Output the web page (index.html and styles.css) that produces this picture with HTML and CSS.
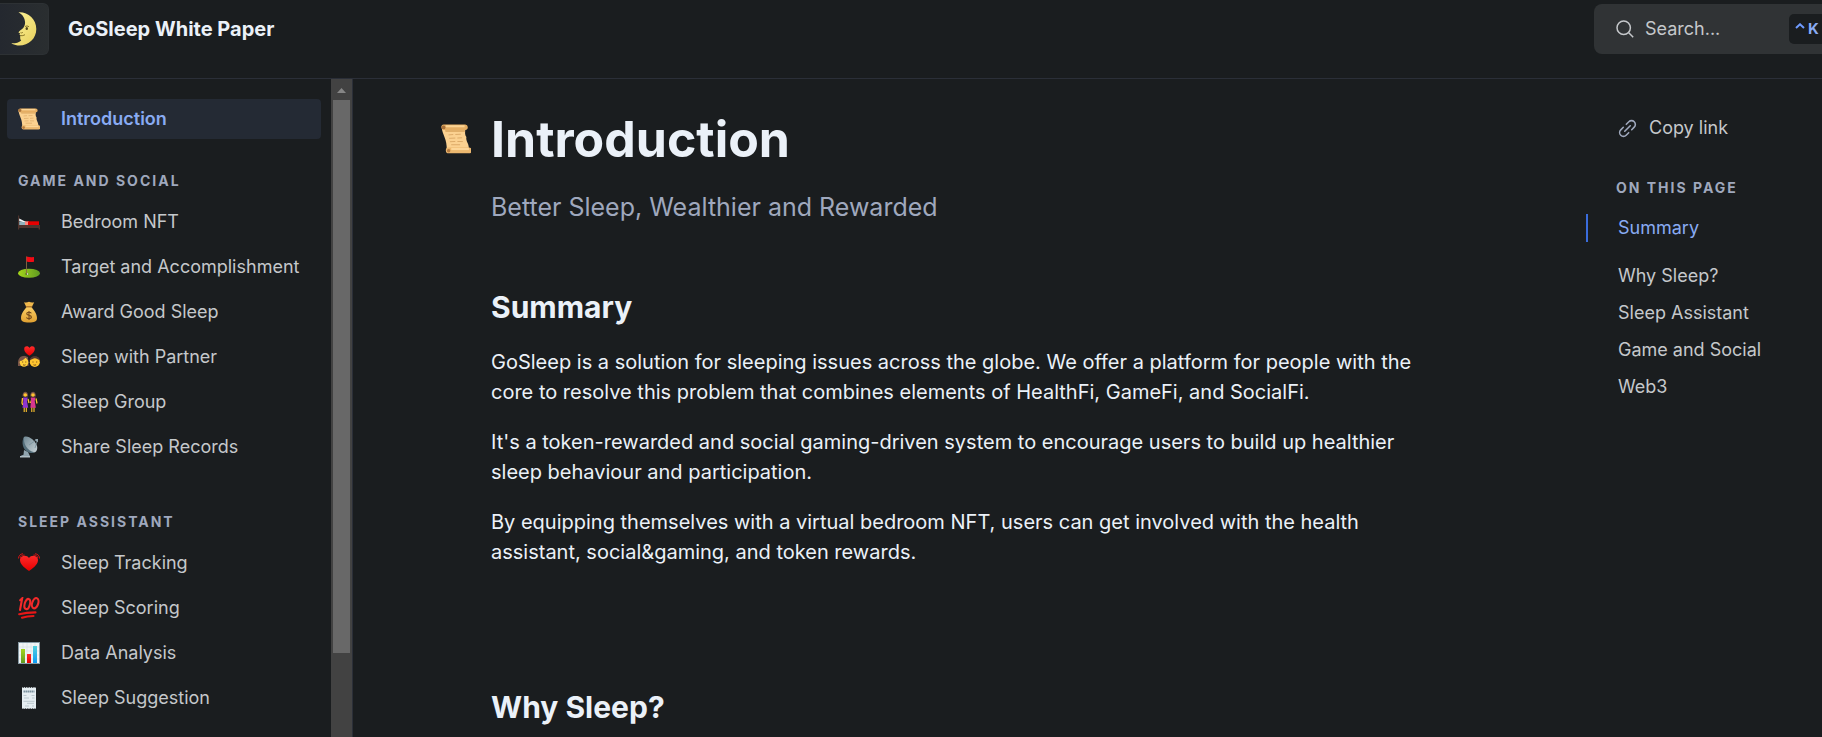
FILE: index.html
```html
<!DOCTYPE html>
<html lang="en">
<head>
<meta charset="utf-8">
<meta name="viewport" content="width=device-width, initial-scale=1">
<title>Introduction - GoSleep White Paper</title>
<link rel="stylesheet" href="styles.css">
</head>
<body>
<svg class="sprite" aria-hidden="true">
  <defs>
    <linearGradient id="g-moon" x1="0" y1="0" x2="1" y2="1"><stop offset="0" stop-color="#fff59a"/><stop offset="1" stop-color="#e6cf5c"/></linearGradient>
    <linearGradient id="g-grass" x1="0" y1="0" x2="1" y2="0"><stop offset="0" stop-color="#a5d61a"/><stop offset="1" stop-color="#5f9a22"/></linearGradient>
    <linearGradient id="g-bag" x1="0" y1="0" x2="0" y2="1"><stop offset="0" stop-color="#fbcf66"/><stop offset="1" stop-color="#e0a030"/></linearGradient>
    <linearGradient id="g-red" x1="0" y1="0" x2="0" y2="1"><stop offset="0" stop-color="#ff2a2a"/><stop offset="1" stop-color="#e60000"/></linearGradient>
    <linearGradient id="g-green" x1="0" y1="0" x2="0" y2="1"><stop offset="0" stop-color="#a5d61a"/><stop offset="1" stop-color="#5f9a22"/></linearGradient>
    <linearGradient id="g-blue" x1="0" y1="0" x2="0" y2="1"><stop offset="0" stop-color="#54d0dc"/><stop offset="1" stop-color="#0b9bf5"/></linearGradient>
    <linearGradient id="g-dish" x1="0" y1="0" x2="1" y2="1"><stop offset="0" stop-color="#6f8792"/><stop offset="1" stop-color="#c8d3d8"/></linearGradient>
    <symbol id="scroll" viewBox="0 0 22 22">
      <path d="M.6 3C1 8 4.600 11 4.200 19.500L20.500 19C20.800 14 18 13 18.600 9.500 17.300 8 17.600 6 18 3z" fill="#fbd190"/>
      <path d="M2 .4h15.500a2 2 0 0 1 .3 4H2.500A2 2 0 0 1 2 .4z" fill="#e5ae63"/>
      <path d="M3.500 .9h13.800v1.500H3.500z" fill="#fbd393"/>
      <path d="M3 4.600h14.500v1H3.300z" fill="#d9a35c"/>
      <circle cx="1.900" cy="2.500" r="1.400" fill="#a9713a"/>
      <path d="M5.500 17.300h15a2.100 2.100 0 0 1 0 4.200H5.800a2.100 2.100 0 0 1-.3-4.200z" fill="#ecb86f"/>
      <path d="M7.500 17.600h13v1.500h-13z" fill="#fdd698"/>
      <circle cx="5.600" cy="19.600" r="1.300" fill="#b67c41"/>
      <path d="M5.500 8l3.500-.3m1.500 0l4-.2M6 10.500l4.500-.2m1.500 0l3.500-.2M6.500 13l4-.2m1.500 0l4 .1M7.500 15.200h6.500" stroke="#dba967" stroke-width=".7" fill="none"/>
    </symbol>
    <symbol id="bed" viewBox="0 0 22 22">
      <path d="M0 4.500h1.200V18.500H0zM20.600 14H22v4.500h-1.400zM1 14h20v3H1z" fill="#4e342e"/>
      <path d="M1.200 10.500H8V14H1.200z" fill="#90b2bd"/>
      <path d="M1.200 7.500l3 1.500L8 11H5L1.200 10z" fill="#f4f7f8"/>
      <path d="M7 10.300h4V14H7z" fill="#ff8a80"/><path d="M10 10.300h11V14H10z" fill="#e60000"/>
    </symbol>
    <symbol id="golf" viewBox="0 0 22 22">
      <ellipse cx="11" cy="17.300" rx="11" ry="4.500" fill="url(#g-grass)"/>
      <ellipse cx="9" cy="18" rx="2" ry=".8" fill="#3f6b16"/><circle cx="9.600" cy="18" r=".8" fill="#fff"/>
      <path d="M8 .5h.9V18H8z" fill="#8b6a43"/><path d="M8.600.4Q12 1.500 16 1v4.700Q12 6.500 8.600 5.500z" fill="#f30a14"/>
    </symbol>
    <symbol id="bag" viewBox="0 0 22 22">
      <path d="M6 1.200Q8.500 2 11 .7 13.500 2 16.200 1.200L13.800 6H8.300z" fill="#f0b84c"/>
      <path d="M8.500 6h5C15 8.500 19 12 19 17c0 3.500-2.500 4.600-8 4.600S3 20.500 3 17C3 12 7 8.500 8.500 6z" fill="url(#g-bag)"/>
      <path d="M7.800 5.800h6.500" stroke="#a46b29" stroke-width="1.200"/>
      <path d="M13.300 12.300c-.5-1.500-4.600-1.600-4.600.5s4.700 1 4.700 3.200-4.500 2-4.900.3M11 10v9" stroke="#764c1d" fill="none" stroke-width="1.100"/>
    </symbol>
    <symbol id="couple" viewBox="0 0 22 22">
      <path d="M11.500 9.800C7 7 6.200 4.500 6.200 2.700 6.500-.5 10.500-.3 11.500 2c1-2.300 5-2.500 5.300.7 0 1.800-.8 4.300-5.300 7.100z" fill="url(#g-red)"/>
      <path d="M0 20c-.5-3 0-10 5.500-10S11 17 10.500 20z" fill="#795548"/>
      <ellipse cx="6" cy="16.200" rx="4.300" ry="4.600" fill="#ffcf3a"/><path d="M1.500 15c3 0 5-2 6-3.500 1 .5 2 1.500 2.500 2.500V11L6 9.800 2 12z" fill="#795548"/>
      <path d="M11.500 15c0-6.500 10.500-6.500 10.500 0z" fill="#4b3029"/><ellipse cx="16.800" cy="16.200" rx="5" ry="4.800" fill="#ffc42e"/>
      <path d="M12 14c0-5 9.600-5 9.600 0-2-.5-3-1.500-4.800-1.700-1.600.2-2.800 1.200-4.800 1.700z" fill="#543930"/>
      <path d="M4.200 16h1M7.300 16h1M14.500 16h1M18.200 16h1M5 18.800q1.200.8 2.500 0M15.500 18.800q1.300.8 2.600 0" stroke="#643b18" stroke-width=".9" fill="none"/>
    </symbol>
    <symbol id="women" viewBox="0 0 22 22">
      <path d="M4.500 7L4 12l.8 2M10 8l1 4M12.500 12l1.500-4M18 7.500l1 5" stroke="#ffc42e" stroke-width="1.300" fill="none"/>
      <path d="M6.200 15v6M8.300 15v6M13.800 15v6M16 15v6" stroke="#ffc42e" stroke-width="1.100"/>
      <path d="M5 6.500h4.800L9 10l1.200 6.800H4.500L5.400 10z" fill="#8e35d0"/><path d="M12.700 6.500h4.800L16.700 10l1.200 6.800h-5.600l.8-6.800z" fill="#d8368f"/>
      <path d="M4.600 5.500c-.5-6.500 6-6.500 5.500 0zM12.300 5.500c-.5-6.500 6-6.500 5.500 0z" fill="#795548"/>
      <circle cx="7.300" cy="4" r="1.800" fill="#ffc42e"/><circle cx="15" cy="4" r="1.800" fill="#ffc42e"/>
    </symbol>
    <symbol id="dish" viewBox="0 0 22 22">
      <path d="M6 14l4 2 2 4.300H2.500q.2-1 3-1.500z" fill="#90a4ae"/><path d="M2 20h10v1.500H2z" fill="#b0bec5"/>
      <path d="M6 1c4-2 11 3 13 9 1 4-1 7-4 6.500C10 16 3 8 6 1z" fill="url(#g-dish)"/>
      <path d="M6 1C3 6 5 13 9 15.500c3 2 6 1.800 7.500.8C9 15 5 7 6 1z" fill="#546e7a"/>
      <path d="M11 9l8-5.500M17 12l2.500-8" stroke="#78909c" stroke-width=".8"/><path d="M17 3h3v3l-1.500-.5z" fill="#90a4ae"/>
    </symbol>
    <symbol id="heart" viewBox="0 0 22 22">
      <path d="M11 19C5 15 2 11.500 2 8 2 3.500 8.500 2 11 6c2.500-4 9-2.500 9 2 0 3.500-3 7-9 11z" fill="url(#g-red)"/>
      <path d="M.5 6.500C.5 4 2 2 5 1.700M2.200 6C2.500 4 4 3 6.500 3M21.500 6.500C21.500 4 20 2 17 1.700M19.800 6c-.3-2-1.800-3-4.300-3" stroke="#e31313" stroke-width=".9" fill="none"/>
    </symbol>
    <symbol id="hundred" viewBox="0 0 22 22">
      <g fill="none" stroke="#f42a2a" stroke-width="2.100" stroke-linecap="round">
        <path d="M2.200 3.200L4.200 1.300 2 13"/><ellipse cx="9.300" cy="7" rx="2.600" ry="5.200" transform="rotate(15 9.300 7)"/><ellipse cx="17.200" cy="6.200" rx="3" ry="5.300" transform="rotate(18 17.200 6.200)"/>
        <path d="M1.200 17.200Q8 15.500 17.500 15.400M4 20.700q5-1.500 11.500-1.700" stroke="#e71717"/>
      </g>
    </symbol>
    <symbol id="chart" viewBox="0 0 22 22">
      <path d="M0 0h22v22H0z" fill="#879aa4"/><path d="M1 1h20v20H1z" fill="#f2f5f6"/>
      <path d="M1 5h20M1 9h20M1 13h20M1 17h20M5 1v20M9 1v20M13 1v20M17 1v20" stroke="#cfd8dc" stroke-width=".5"/>
      <path d="M3 7h4v14H3z" fill="url(#g-green)"/><path d="M9 12h4v9H9z" fill="url(#g-red)"/><path d="M15 4h4v17h-4z" fill="url(#g-blue)"/>
    </symbol>
    <symbol id="receipt" viewBox="0 0 22 22">
      <path d="M4 0l1.200 1L6.400 0l1.200 1 1.200-1L10 1l1.200-1 1.200 1 1.200-1 1.200 1L16 0l1.200 1L18 0v22l-1-.8-1.200.8-1.200-.8-1.200.8-1.200-.8-1.200.8-1.200-.8-1.200.8-1.200-.8-1.200.8-1.200-.8L4 22z" fill="#e6eef2"/>
      <path d="M5.500 4.500h11" stroke="#7c929e" stroke-width="1.800" stroke-dasharray="1.600 .4"/>
      <path d="M5.500 8.500h3m5 0h3M6 11h5m3 0h2.500M5.500 14.300h11M9 16.300h7M7 19h4m3 0h2" stroke="#b5c3ca" stroke-width=".9"/>
    </symbol>
  </defs>
</svg>

<header class="topbar">
  <a class="brand" href="#">
    <span class="brand-logo">
      <svg class="moon" viewBox="0 0 26 34" aria-hidden="true">
        <path d="M7.500.3C17-.2 25.300 7 25.300 17S17 34.300 6.500 33.500C4 33.200 1.500 32.300.3 31.300c4.200.2 7.500-.8 9.900-2.900-.8-.7-1.200-1.500-.9-2.500L9 24.600l1-.9-1.500-1 .5-1.500-1.600-.8c.9-1.800 3.600-2.800 5-4.600C16 10.500 13.500 3.500 7.500.3z" fill="url(#g-moon)"/>
        <path d="M14 14.500q2-1.300 4 .2M9.500 23.700q2.500.3 4.500-1M9.500 20.700q1.300.6 2.300-.3" stroke="#8b7928" stroke-width="1" fill="none"/>
        <ellipse cx="15.800" cy="16.500" rx="1.200" ry="1.600" fill="#53481b"/>
      </svg>
    </span>
    <span class="brand-name">GoSleep White Paper</span>
  </a>
  <label class="search">
    <svg class="search-icon" viewBox="0 0 18 18" aria-hidden="true"><circle cx="7.700" cy="7.700" r="6.700"/><path d="M12.500 12.500l4.700 4.700"/></svg>
    <input class="search-input" type="text" placeholder="Search..." aria-label="Search">
    <kbd class="shortcut"><svg class="caret" viewBox="0 0 10 6" aria-hidden="true"><path d="M1 5l4-3.700L9 5"/></svg>K</kbd>
  </label>
</header>

<div class="layout">
  <aside class="sidebar">
    <nav class="side-nav" aria-label="Pages">
      <a class="page-link active" href="#"><svg class="emoji"><use href="#scroll"/></svg>Introduction</a>
      <h2 class="group-title">GAME AND SOCIAL</h2>
      <ul class="page-list">
        <li><a class="page-link" href="#"><svg class="emoji"><use href="#bed"/></svg>Bedroom NFT</a></li>
        <li><a class="page-link" href="#"><svg class="emoji"><use href="#golf"/></svg>Target and Accomplishment</a></li>
        <li><a class="page-link" href="#"><svg class="emoji"><use href="#bag"/></svg>Award Good Sleep</a></li>
        <li><a class="page-link" href="#"><svg class="emoji"><use href="#couple"/></svg>Sleep with Partner</a></li>
        <li><a class="page-link" href="#"><svg class="emoji"><use href="#women"/></svg>Sleep Group</a></li>
        <li><a class="page-link" href="#"><svg class="emoji"><use href="#dish"/></svg>Share Sleep Records</a></li>
      </ul>
      <h2 class="group-title">SLEEP ASSISTANT</h2>
      <ul class="page-list">
        <li><a class="page-link" href="#"><svg class="emoji"><use href="#heart"/></svg>Sleep Tracking</a></li>
        <li><a class="page-link" href="#"><svg class="emoji"><use href="#hundred"/></svg>Sleep Scoring</a></li>
        <li><a class="page-link" href="#"><svg class="emoji"><use href="#chart"/></svg>Data Analysis</a></li>
        <li><a class="page-link" href="#"><svg class="emoji"><use href="#receipt"/></svg>Sleep Suggestion</a></li>
      </ul>
    </nav>
    <div class="scrollbar" aria-hidden="true">
      <svg class="scroll-up" viewBox="0 0 21 21"><path d="M6 14h9l-4.500-5z"/></svg>
      <div class="scroll-thumb"></div>
    </div>
  </aside>

  <main class="article">
    <svg class="title-emoji" aria-hidden="true"><use href="#scroll"/></svg>
    <div class="content">
      <h1 class="title">Introduction</h1>
      <p class="subtitle">Better Sleep, Wealthier and Rewarded</p>
      <section class="section" id="summary">
        <h2 class="section-title">Summary</h2>
        <p>GoSleep is a solution for sleeping issues across the globe. We offer a platform for people with the core to resolve this problem that combines elements of HealthFi, GameFi, and SocialFi.</p>
        <p>It's a token-rewarded and social gaming-driven system to encourage users to build up healthier sleep behaviour and participation.</p>
        <p>By equipping themselves with a virtual bedroom NFT, users can get involved with the health assistant, social&amp;gaming, and token rewards.</p>
      </section>
      <section class="section" id="why-sleep">
        <h2 class="section-title">Why Sleep?</h2>
      </section>
    </div>
  </main>

  <aside class="outline">
    <button class="copy-link" type="button">
      <svg class="link-icon" viewBox="0 0 24 24" aria-hidden="true"><path d="M8.500 15.500l7-7M10.500 6.700l3.200-3.200a4.600 4.600 0 0 1 6.800 6.800l-3.200 3.200M13.500 17.300l-3.200 3.200a4.600 4.600 0 0 1-6.800-6.800l3.200-3.200"/></svg>
      Copy link
    </button>
    <h2 class="outline-title">ON THIS PAGE</h2>
    <nav class="outline-nav" aria-label="On this page">
      <a class="outline-link current" href="#summary">Summary</a>
      <a class="outline-link" href="#why-sleep">Why Sleep?</a>
      <a class="outline-link" href="#">Sleep Assistant</a>
      <a class="outline-link" href="#">Game and Social</a>
      <a class="outline-link" href="#">Web3</a>
    </nav>
  </aside>
</div>
</body>
</html>
```
FILE: styles.css
```css
* {
  box-sizing: border-box;
}

body {
  display: flex;
  flex-direction: column;
  height: 100vh;
  margin: 0;
  overflow: hidden;
  background: #1a1d1f;
  color: #ebf1f8;
  font-family: Inter, "Liberation Sans", sans-serif;
  font-size: 20px;
  line-height: 30px;
}

h1,
h2,
p,
ul {
  margin: 0;
  padding: 0;
}

ul {
  list-style: none;
}

a {
  color: inherit;
  text-decoration: none;
}

.sprite {
  position: absolute;
  width: 0;
  height: 0;
}

/* Top bar */

.topbar {
  display: flex;
  flex: none;
  justify-content: space-between;
  align-items: flex-start;
  height: 79px;
  padding-top: 3px;
  overflow: hidden;
  border-bottom: 1px solid #2b2f38;
}

.brand {
  display: flex;
  align-items: center;
  gap: 19px;
}

.brand-logo {
  display: flex;
  align-items: center;
  justify-content: center;
  width: 49px;
  height: 52px;
  border: 1px solid #2d3134;
  border-left: 0;
  border-radius: 0 6px 6px 0;
  background: linear-gradient(90deg, #24282f, #2a2e30);
}

.moon {
  width: 26px;
  height: 34px;
}

.brand-name {
  font-weight: 700;
}

.search {
  display: flex;
  align-items: center;
  gap: 11px;
  width: 240px;
  height: 50px;
  margin: 1px -12px 0 0;
  padding: 0 0 0 22px;
  border-radius: 8px;
  background: #303335;
}

.search-icon {
  flex: none;
  width: 18px;
  height: 18px;
  fill: none;
  stroke: #c5c8cb;
  stroke-width: 1.5;
}

.search-input {
  flex: 1;
  min-width: 0;
  padding: 0;
  border: 0;
  outline: 0;
  background: transparent;
  color: #c5c8cb;
  font: inherit;
  font-size: 18px;
}

.search-input::placeholder {
  color: #c5c8cb;
  opacity: 1;
}

.shortcut {
  display: flex;
  align-items: center;
  gap: 3px;
  width: 45px;
  height: 30px;
  padding-left: 6px;
  border-radius: 5px;
  background: #1a1d1f;
  color: #89abf3;
  font: inherit;
  font-size: 15px;
  font-weight: 700;
}

.caret {
  width: 10px;
  height: 6px;
  margin-bottom: 6px;
  fill: none;
  stroke: #6f9bff;
  stroke-width: 2;
}

/* Page layout */

.layout {
  display: grid;
  flex: 1;
  grid-template-columns: 353px minmax(0, 1fr) 236px;
  min-height: 0;
}

/* Sidebar */

.sidebar {
  display: flex;
  min-height: 0;
  overflow: hidden;
  border-right: 1px solid #2b2f38;
}

.side-nav {
  flex: 1;
  padding: 20px 10px 0 7px;
}

.page-link {
  display: flex;
  align-items: center;
  gap: 21px;
  height: 40px;
  padding: 0 11px;
  border-radius: 4px;
  color: #c5c8cb;
  font-size: 18px;
  white-space: nowrap;
}

.page-link.active {
  background: #242a34;
  color: #89abf3;
  font-weight: 600;
}

.emoji {
  flex: none;
  width: 22px;
  height: 22px;
}

.group-title,
.outline-title {
  color: #9fa8bd;
  font-size: 14px;
  font-weight: 700;
  letter-spacing: 2px;
  line-height: 20px;
}

.group-title {
  padding-left: 11px;
}

.page-link + .group-title {
  margin-top: 32px;
}

.page-list {
  display: grid;
  gap: 5px;
  margin: 11px 0 45px;
}

.scrollbar {
  display: flex;
  flex-direction: column;
  align-items: center;
  width: 21px;
  background: #424242;
}

.scroll-up {
  flex: none;
  width: 21px;
  height: 21px;
  fill: #868686;
}

.scroll-thumb {
  width: 17px;
  height: 84%;
  background: #686868;
}

/* Article */

.article {
  display: flex;
  gap: 20px;
  padding: 28px 60px 0 88px;
  overflow: hidden;
}

.title-emoji {
  flex: none;
  width: 30px;
  height: 30px;
  margin-top: 17px;
}

.content {
  max-width: 940px;
}

.title {
  font-size: 50px;
  font-weight: 700;
  line-height: 64px;
}

.subtitle {
  margin-top: 20px;
  color: #9fa8bd;
  font-size: 25px;
  line-height: 32px;
}

.section-title {
  font-size: 30px;
  font-weight: 700;
  line-height: 40px;
}

.section {
  margin-top: 64px;
}

.section + .section {
  margin-top: 120px;
}

.section p {
  margin-top: 20px;
}

/* Page outline */

.outline {
  padding-top: 34px;
}

.copy-link {
  display: flex;
  align-items: center;
  gap: 12px;
  margin: 0;
  padding: 0 0 0 32px;
  border: 0;
  background: none;
  color: #c5c8cb;
  font: inherit;
  font-size: 18px;
}

.link-icon {
  width: 19px;
  height: 19px;
  fill: none;
  stroke: #9fa8bd;
  stroke-width: 2;
  stroke-linecap: round;
}

.outline-title {
  margin-top: 35px;
  padding-left: 30px;
}

.outline-nav {
  display: grid;
  gap: 9px;
  margin-top: 16px;
}

.outline-link {
  padding-left: 32px;
  color: #c5c8cb;
  font-size: 18px;
  line-height: 28px;
}

.outline-link.current {
  margin-bottom: 11px;
  padding-left: 30px;
  border-left: 2px solid #3a6cdb;
  color: #89abf3;
}
```
